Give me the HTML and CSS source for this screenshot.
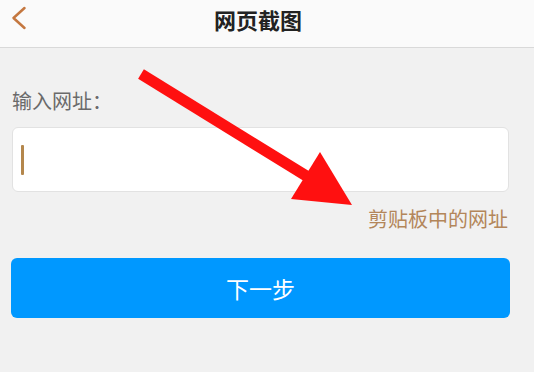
FILE: index.html
```html
<!DOCTYPE html>
<html lang="zh">
<head>
<meta charset="utf-8">
<link rel="stylesheet" href="styles.css">
</head>
<body>
<div class="page">
  <header class="header">
    <svg class="back" width="20" height="30" viewBox="0 0 20 30"><path d="M16.5 5 L5.5 15 L16.5 25" fill="none" stroke="#c4773f" stroke-width="2.5" stroke-linecap="round" stroke-linejoin="round"/></svg>
    <div class="title">网页截图</div>
  </header>
  <main class="content">
    <div class="label">输入网址：</div>
    <div class="input"><span class="cursor"></span></div>
    <div class="clip">剪贴板中的网址</div>
    <div class="btn">下一步</div>
  </main>
  <svg class="arrow" width="534" height="372" viewBox="0 0 534 372">
    <line x1="141" y1="74" x2="308" y2="177" stroke="#ff1010" stroke-width="11"/>
    <polygon points="320,152 291,199 352,205" fill="#ff1010"/>
  </svg>
</div>
</body>
</html>
```
FILE: styles.css
```css
html, body {
  margin: 0;
  padding: 0;
  background: #f1f1f1;
  font-family: "Noto Sans CJK SC", "Noto Sans", sans-serif;
}
.page {
  position: relative;
  width: 534px;
  height: 372px;
  overflow: hidden;
}
.header {
  height: 47px;
  background: #fafafa;
  border-bottom: 1px solid #d9d9d9;
  display: flex;
  align-items: flex-start;
}
.back {
  margin: 3px 0 0 8px;
  flex: none;
}
.title {
  flex: 1;
  text-align: center;
  font-size: 22px;
  font-weight: bold;
  color: #222;
  line-height: 30px;
  margin-top: 4px;
  padding-right: 46px;
}
.content {
  padding: 0 25px 0 12px;
  display: flex;
  flex-direction: column;
}
.label {
  margin-top: 39px;
  font-size: 20px;
  line-height: 28px;
  color: #6a6a6a;
}
.input {
  margin-top: 12px;
  height: 63px;
  background: #fff;
  border: 1px solid #e2e2e2;
  border-radius: 6px;
  display: flex;
  align-items: center;
  padding-left: 8px;
}
.cursor {
  width: 3px;
  height: 30px;
  background: #b4874c;
  border-radius: 1px;
}
.clip {
  margin-top: 13px;
  text-align: right;
  font-size: 20px;
  line-height: 28px;
  color: #b3865a;
  padding-right: 1px;
}
.btn {
  margin-top: 25px;
  margin-left: -1px;
  margin-right: -1px;
  height: 60px;
  background: #0098ff;
  border-radius: 6px;
  color: #fff;
  font-size: 23px;
  display: flex;
  align-items: center;
  justify-content: center;
}
.arrow {
  position: absolute;
  left: 0;
  top: 0;
  pointer-events: none;
}
```
